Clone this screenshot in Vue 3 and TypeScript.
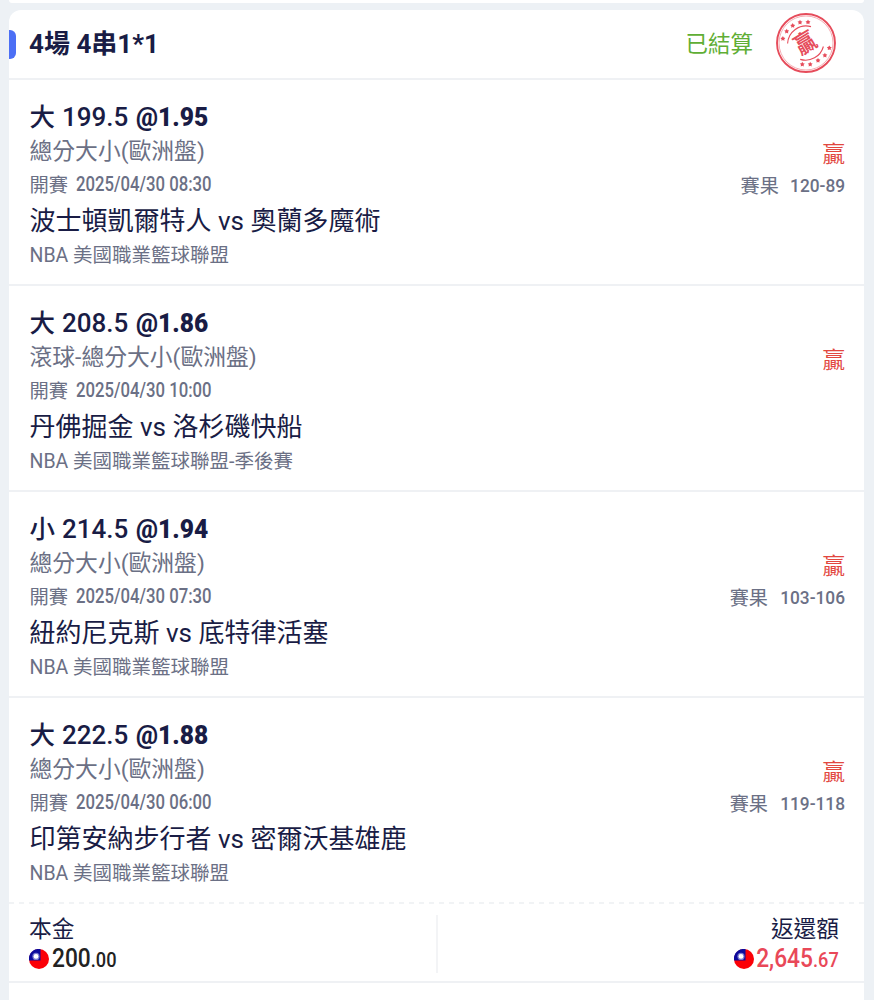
<template>
  <div class="page">
    <div class="card card-prev"></div>

    <section class="card slip">
      <header class="slip-head">
        <span class="marker"></span>
        <h1 class="slip-title">4場 4串1*1</h1>
        <span class="status">已結算</span>
        <svg class="stamp" viewBox="0 0 62 62" aria-hidden="true">
          <circle class="ring" cx="31" cy="31" r="29" />
          <circle class="ring ring-thin" cx="31" cy="31" r="27" />
          <path class="arc" d="M12.6 31.5A18.5 18.5 0 0 1 36 14.6M48.4 34.5A18.5 18.5 0 0 1 25.2 47.4" />
          <polygon v-for="(s, i) in stars" :key="i" class="star" :points="starPoints(s[0], s[1])" />
          <text class="stamp-text" x="0" y="8.4" text-anchor="middle" transform="translate(30 30.8) rotate(-31) scale(.9 1.04)">贏</text>
        </svg>
      </header>

      <article v-for="bet in bets" :key="bet.teams" class="bet">
        <div class="bet-main">
          <div class="pick"><span class="side">{{ bet.side }}</span><span class="line">{{ bet.line }}</span><b class="odds">@{{ bet.odds }}</b></div>
          <div class="market">{{ bet.market }}</div>
          <div class="kickoff"><span>開賽</span><span class="date">{{ bet.date }}</span></div>
          <div class="teams">{{ bet.teams }}</div>
          <div class="league">{{ bet.league }}</div>
        </div>
        <div class="bet-side">
          <div class="outcome">贏</div>
          <div v-if="bet.score" class="result"><span>賽果</span><span class="score">{{ bet.score }}</span></div>
        </div>
      </article>

      <footer class="totals">
        <div class="total">
          <div class="total-label">本金</div>
          <div class="amount">
            <svg class="flag" viewBox="0 0 20 20" aria-hidden="true">
              <circle cx="10" cy="10" r="10" fill="#fb0007" />
              <path d="M0 11.5A10 10 0 0 1 11.5 0V11.5Z" fill="#0c0a9c" />
              <circle cx="7" cy="7.4" r="3.6" fill="#7b7bd0" />
              <circle cx="7" cy="7.4" r="2.4" fill="#fff" />
            </svg>
            <span class="figure">200<small>.00</small></span>
          </div>
        </div>
        <div class="divider"></div>
        <div class="total total-return">
          <div class="total-label">返還額</div>
          <div class="amount">
            <svg class="flag" viewBox="0 0 20 20" aria-hidden="true">
              <circle cx="10" cy="10" r="10" fill="#fb0007" />
              <path d="M0 11.5A10 10 0 0 1 11.5 0V11.5Z" fill="#0c0a9c" />
              <circle cx="7" cy="7.4" r="3.6" fill="#7b7bd0" />
              <circle cx="7" cy="7.4" r="2.4" fill="#fff" />
            </svg>
            <span class="figure">2,645<small>.67</small></span>
          </div>
        </div>
      </footer>
    </section>
  </div>
</template>

<script setup lang="ts">
interface Bet {
  side: string
  line: string
  odds: string
  market: string
  date: string
  teams: string
  league: string
  score?: string
}

const bets: Bet[] = [
  { side: '大', line: '199.5', odds: '1.95', market: '總分大小(歐洲盤)', date: '2025/04/30 08:30', teams: '波士頓凱爾特人 vs 奧蘭多魔術', league: 'NBA 美國職業籃球聯盟', score: '120-89' },
  { side: '大', line: '208.5', odds: '1.86', market: '滾球-總分大小(歐洲盤)', date: '2025/04/30 10:00', teams: '丹佛掘金 vs 洛杉磯快船', league: 'NBA 美國職業籃球聯盟-季後賽' },
  { side: '小', line: '214.5', odds: '1.94', market: '總分大小(歐洲盤)', date: '2025/04/30 07:30', teams: '紐約尼克斯 vs 底特律活塞', league: 'NBA 美國職業籃球聯盟', score: '103-106' },
  { side: '大', line: '222.5', odds: '1.88', market: '總分大小(歐洲盤)', date: '2025/04/30 06:00', teams: '印第安納步行者 vs 密爾沃基雄鹿', league: 'NBA 美國職業籃球聯盟', score: '119-118' },
]

// star centres along the stamp's two rims
const stars: [number, number][] = [
  [7.9, 26.7], [11.7, 19.3], [17.7, 13.7], [25, 10.4], [33, 10.2],
  [54.3, 36], [49.9, 43.3], [43, 48.5], [35.2, 52.3], [27.3, 52.3],
]

function starPoints(cx: number, cy: number): string {
  return Array.from({ length: 10 }, (_, i) => {
    const r = i % 2 ? 1.4 : 2.6
    const a = (Math.PI / 5) * i - Math.PI / 2
    return `${(cx + r * Math.cos(a)).toFixed(2)},${(cy + r * Math.sin(a)).toFixed(2)}`
  }).join(' ')
}
</script>

<style>
body { background: #edf1f5; }
</style>

<style scoped>
.page {
  box-sizing: border-box;
  height: 1000px;
  overflow: hidden;
  padding: 0 10px 0 9px;
  color: #191c45;
  background: #edf1f5;
  font-family: Roboto, "Noto Sans CJK TC", sans-serif;
  white-space: nowrap;
}
.card { background: #fff; }
.card-prev { height: 3px; margin-bottom: 7px; border-radius: 0 0 12px 12px; }
.slip { height: 1010px; border-radius: 12px 12px 0 0; }
.slip-head {
  display: flex;
  align-items: center;
  height: 68px;
  padding-right: 27px;
  border-bottom: 2px solid #eff1f4;
}
.marker { width: 7px; height: 29px; border-radius: 0 6px 6px 0; background: #4c6ff5; }
.slip-title { flex: 1; margin: 0 0 0 13px; font-size: 26px; font-weight: 700; line-height: 34px; }
.status { margin-right: 22px; color: #5fae35; font-size: 22.5px; line-height: 34px; }
.stamp { width: 62px; height: 62px; margin-top: -2px; }
.ring, .arc { fill: none; stroke: #e64c5b; stroke-width: 1.9; }
.ring-thin { stroke-width: .7; opacity: .65; }
.arc { stroke-width: 1.1; }
.star { fill: #e64c5b; }
.stamp-text { fill: #e64c5b; font-size: 23px; font-weight: 700; }

.bet {
  display: flex;
  justify-content: space-between;
  box-sizing: border-box;
  height: 206px;
  padding: 20px 19px 0 20.5px;
  border-bottom: 2px solid #eff1f4;
}
.bet:nth-last-child(2) { border-bottom: 0; height: 204px; }
.pick, .market, .kickoff, .league { height: 34px; line-height: 34px; }
/* digits are set slightly condensed next to the CJK labels */
.pick { display: flex; height: 35px; font-size: 26px; font-weight: 500; }
.side { width: 32.5px; font-size: 25.5px; }
.line { width: 74px; }
.odds { font-weight: 900; transform: scaleX(.945); transform-origin: left; }
.market { color: #6b7085; font-size: 22.8px; }
.kickoff { display: flex; gap: 8px; color: #6b7085; font-size: 19.3px; }
.date { font-weight: 500; transform: translateY(-1px) scaleX(.867); transform-origin: left; }
.teams { height: 36px; font-size: 26px; line-height: 36px; }
.league { color: #6b7085; font-size: 19.5px; }
.bet-side {
  display: flex;
  flex-direction: column;
  align-items: flex-end;
  padding-top: 38px;
}
.outcome { height: 32px; color: #e2473f; font-size: 22.5px; line-height: 32px; }
.result { display: flex; gap: 5px; color: #6b7085; font-size: 19.2px; line-height: 34px; }
.score { font-weight: 500; transform: translateY(-1px) scaleX(.9); transform-origin: right; }

.totals {
  display: flex;
  box-sizing: border-box;
  height: 81px;
  padding: 13px 25px 0 20px;
  border-bottom: 2px solid #eff1f4;
  background: repeating-linear-gradient(90deg, #f1f3f5 0 5px, transparent 5px 10px) 0 0 / 100% 2px no-repeat;
}
.total { flex: 1 1 0; }
.total-label { height: 30px; font-size: 22.7px; line-height: 30px; }
.divider { width: 2px; height: 58px; margin-left: 6px; background: #f3f4f6; }
.total-return { display: flex; flex-direction: column; align-items: flex-end; }
.amount { display: flex; align-items: center; height: 28px; color: #222; font-size: 25px; font-weight: 500; line-height: 28px; }
.flag { width: 20px; height: 20px; margin-right: 3px; }
.figure { transform: scaleX(.91); transform-origin: left; }
.figure small { font-size: 20px; }
.total-return .amount { color: #e94858; }
.total-return .flag { margin-right: -6px; }
.total-return .figure { transform-origin: right; }
</style>
